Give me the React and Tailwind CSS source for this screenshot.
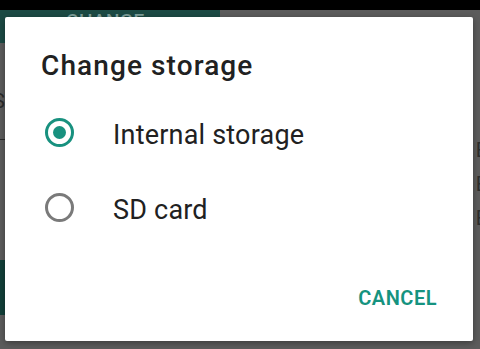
import React, { useState } from 'react';

const options = ['Internal storage', 'SD card'];

const Radio = ({ checked }) =>
    checked ? (
        <span className="flex h-[29px] w-[29px] shrink-0 items-center justify-center rounded-full border-[3.5px] border-[#18917f]">
            <span className="h-[13px] w-[13px] rounded-full bg-[#18917f]" />
        </span>
    ) : (
        <span className="h-[29px] w-[29px] shrink-0 rounded-full border-[3px] border-[#7a7a7a]" />
    );

const App = () => {
    const [selected, setSelected] = useState(0);

    return (
        <div
            className="relative h-[349px] w-[480px] overflow-hidden bg-[#5c5c5c]"
            style={{ fontFamily: 'Roboto, "Liberation Sans", sans-serif' }}
        >
            {/* status bar */}
            <div className="h-[10px] bg-black" />

            {/* dimmed screen behind the dialog */}
            <div className="flex h-[33px] w-[220px] items-start bg-[#1c4a44] pl-[66px]">
                <span className="-mt-[3px] text-[19px] font-medium tracking-wide text-[#7f9f9a]">CHANGE</span>
            </div>
            <div className="flex flex-col pl-[1px] pt-[48px] text-[20px] leading-none text-[#2a2a2a]">
                <span className="-ml-[8px]">S</span>
            </div>
            <div className="mt-[28px] h-[1px] w-[6px] bg-[#2a2a2a]" />
            <div className="absolute left-0 top-[260px] h-[55px] w-[6px] bg-[#123f39]" />
            <div className="absolute right-0 top-[140px] flex flex-col gap-[14px] text-[20px] leading-none text-[#2d2d2d]">
                <span className="-mr-[7px]">E</span>
                <span className="-mr-[7px]">E</span>
                <span className="-mr-[7px]">E</span>
            </div>

            {/* dialog */}
            <div className="absolute left-[5px] top-[17px] flex h-[324px] w-[468px] flex-col rounded-[2px] bg-white shadow-[0_2px_6px_rgba(0,0,0,0.35)]">
                <h2 className="pl-[36px] pt-[33px] text-[28px] font-medium leading-[32px] tracking-[1.1px] text-[#212121]">
                    Change storage
                </h2>
                <div className="mt-[13px] flex flex-col">
                    {options.map((label, i) => (
                        <button
                            key={label}
                            onClick={() => setSelected(i)}
                            className="flex h-[75px] items-center gap-[39px] pl-[40px] text-left"
                        >
                            <Radio checked={selected === i} />
                            <span className="pt-[6px] text-[27px] tracking-[0.2px] text-[#212121]">{label}</span>
                        </button>
                    ))}
                </div>
                <div className="mt-auto flex justify-end pb-[28px] pr-[36px]">
                    <button className="text-[20px] font-semibold tracking-[0.5px] text-[#16937f]">CANCEL</button>
                </div>
            </div>
        </div>
    );
};

export default App;
